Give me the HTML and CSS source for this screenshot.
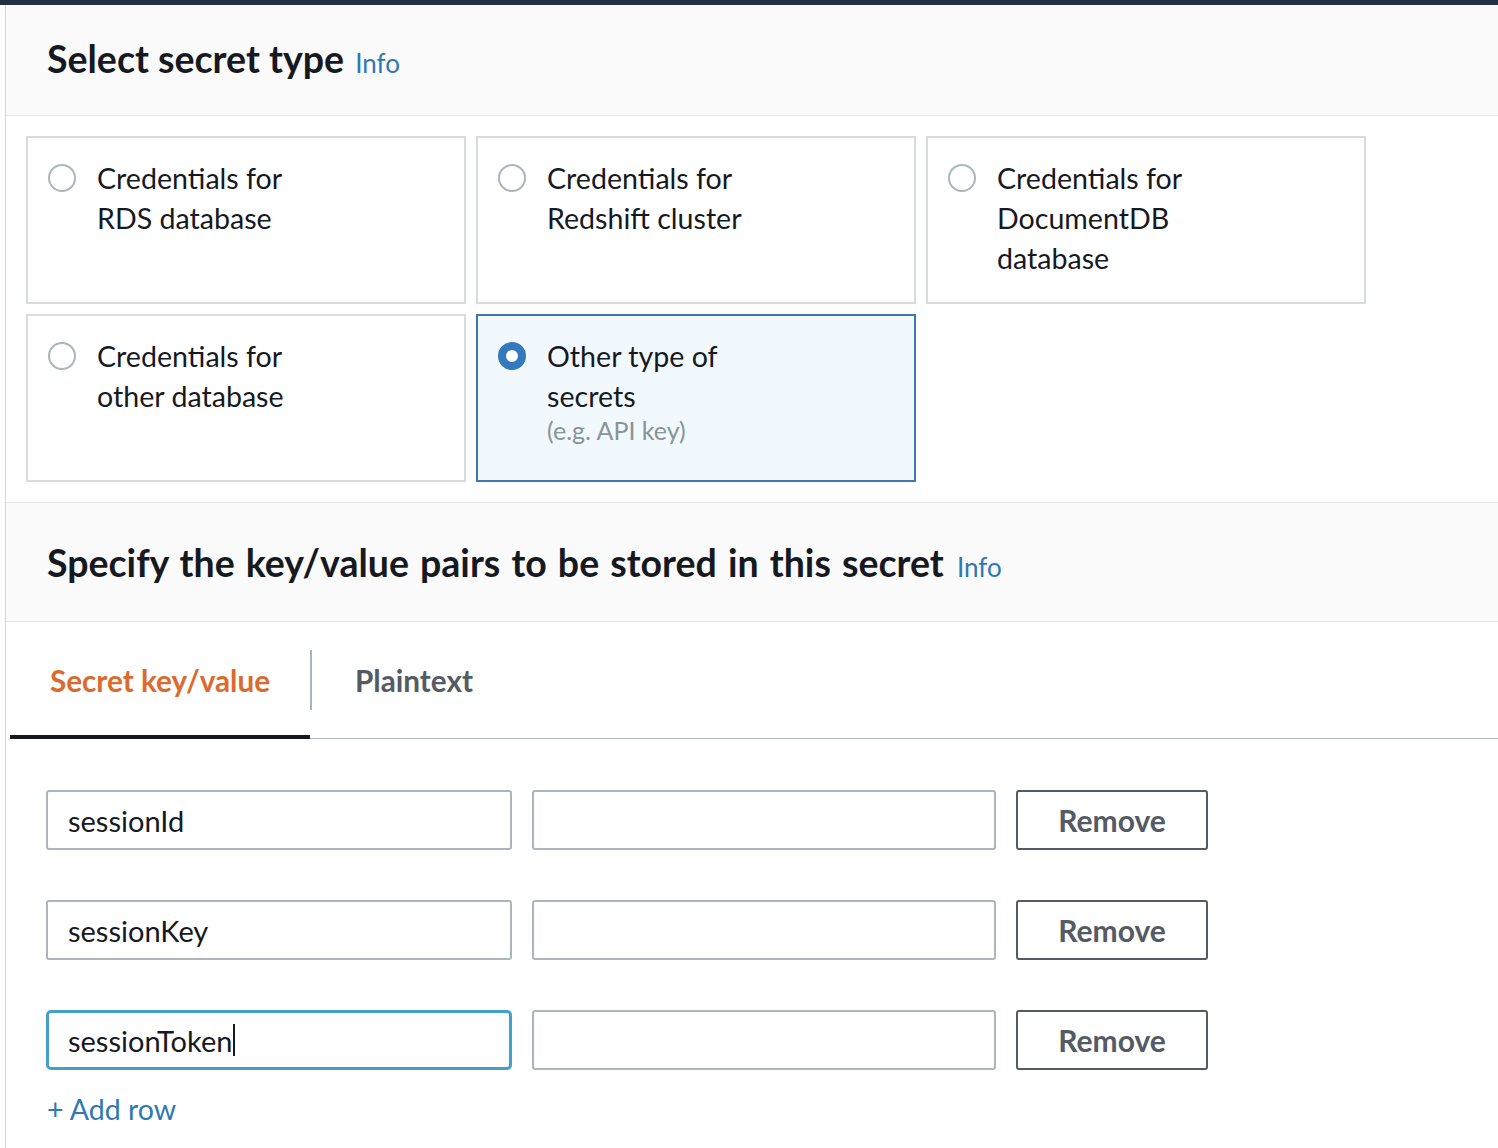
FILE: index.html
```html
<!DOCTYPE html>
<html lang="en">
<head>
<meta charset="utf-8">
<title>Secrets</title>
<link rel="stylesheet" href="styles.css">
</head>
<body>
<div class="topbar"></div>
<div class="panel">
  <div class="sec-head">
    <h2 class="title">Select secret type <a class="info">Info</a></h2>
  </div>
  <div class="cards">
    <div class="card">
      <span class="radio"></span>
      <div class="label">Credentials for<br>RDS database</div>
    </div>
    <div class="card">
      <span class="radio"></span>
      <div class="label">Credentials for<br>Redshift cluster</div>
    </div>
    <div class="card">
      <span class="radio"></span>
      <div class="label">Credentials for<br>DocumentDB<br>database</div>
    </div>
    <div class="card">
      <span class="radio"></span>
      <div class="label">Credentials for<br>other database</div>
    </div>
    <div class="card selected">
      <span class="radio on"></span>
      <div class="label">Other type of<br>secrets<div class="sub">(e.g. API key)</div></div>
    </div>
  </div>
  <div class="sec-head second">
    <h2 class="title wide">Specify the key/value pairs to be stored in this secret <a class="info">Info</a></h2>
  </div>
  <div class="tabs">
    <div class="tab active">Secret key/value</div>
    <div class="tab-sep"></div>
    <div class="tab">Plaintext</div>
  </div>
  <div class="rows">
    <div class="row">
      <div class="field">sessionId</div>
      <div class="field"></div>
      <div class="btn">Remove</div>
    </div>
    <div class="row">
      <div class="field">sessionKey</div>
      <div class="field"></div>
      <div class="btn">Remove</div>
    </div>
    <div class="row">
      <div class="field focus">sessionToken<span class="caret"></span></div>
      <div class="field"></div>
      <div class="btn">Remove</div>
    </div>
    <a class="add">+ Add row</a>
  </div>
</div>
</body>
</html>
```
FILE: styles.css
```css
* { box-sizing: border-box; }
html, body { margin: 0; padding: 0; background: #ffffff; }
body {
  font-family: Lato, "Open Sans", "Liberation Sans", sans-serif;
  color: #16191f;
  width: 1498px;
  height: 1148px;
  overflow: hidden;
}
.topbar { height: 5px; background: #232f3e; }
.panel {
  margin-left: 5px;
  border-left: 1px solid #d5d5d5;
  min-height: 1143px;
}
.sec-head {
  background: #fafafa;
  height: 111px;
  border-bottom: 1px solid #e3e6e6;
  display: flex;
  align-items: center;
  padding-left: 41px;
  padding-bottom: 4px;
}
.sec-head.second {
  height: 120px;
  border-top: 1px solid #e3e6e6;
  padding-bottom: 0;
}
.title {
  margin: 0;
  font-size: 37.5px;
  font-weight: 700;
}
.title.wide { word-spacing: 2px; }
.info {
  font-size: 26px;
  font-weight: 400;
  color: #2f78b5;
  margin-left: 2px;
  word-spacing: 0;
}
.cards {
  display: grid;
  grid-template-columns: 440px 440px 440px;
  grid-auto-rows: 168px;
  gap: 10px;
  padding: 20px;
}
.card {
  border: 2px solid #d9dcdc;
  padding: 20px 20px;
  display: flex;
  gap: 21px;
}
.card.selected {
  background: #f1f8fe;
  border-color: #3d78b2;
}
.radio {
  flex: none;
  width: 28px;
  height: 28px;
  margin-top: 6px;
  border-radius: 50%;
  border: 2px solid #aab7b8;
  background: #fff;
}
.radio.on {
  border: 8px solid #3479bd;
}
.label {
  font-size: 28.6px;
  line-height: 40px;
}
.sub {
  font-size: 25px;
  line-height: 28px;
  color: #879596;
}
.tabs {
  display: flex;
  align-items: center;
  height: 117px;
  margin-left: 4px;
  border-bottom: 1px solid #aab7b8;
}
.tab {
  height: 100%;
  display: flex;
  align-items: center;
  font-size: 29.7px;
  font-weight: 700;
  color: #545b64;
  padding: 0 43px;
}
.tab.active {
  color: #dc6a2c;
  width: 300px;
  justify-content: center;
  padding: 0;
  border-bottom: 4px solid #16191f;
  margin-bottom: -1px;
  padding-top: 3px;
}
.tab-sep {
  width: 2px;
  height: 60px;
  background: #aab7b8;
}
.rows {
  padding: 51px 0 0 40px;
}
.row {
  display: flex;
  gap: 20px;
  margin-bottom: 50px;
  height: 60px;
}
.field {
  width: 466px;
  height: 60px;
  border: 2px solid #aab7b8;
  border-radius: 3px;
  font-size: 29px;
  padding-left: 20px;
  display: flex;
  align-items: center;
}
.field + .field { width: 464px; }
.field.focus {
  border: 3px solid #44a0c8;
  border-radius: 5px;
  padding-left: 19px;
}
.caret {
  display: inline-block;
  width: 2px;
  height: 32px;
  background: #16191f;
  margin-left: 1px;
}
.btn {
  width: 192px;
  height: 60px;
  border: 2px solid #545b64;
  border-radius: 3px;
  font-size: 30px;
  font-weight: 700;
  color: #545b64;
  display: flex;
  align-items: center;
  justify-content: center;
}
.add {
  display: block;
  margin-top: -28px;
  font-size: 28.5px;
  color: #2f78b5;
  padding-left: 1px;
}
```
